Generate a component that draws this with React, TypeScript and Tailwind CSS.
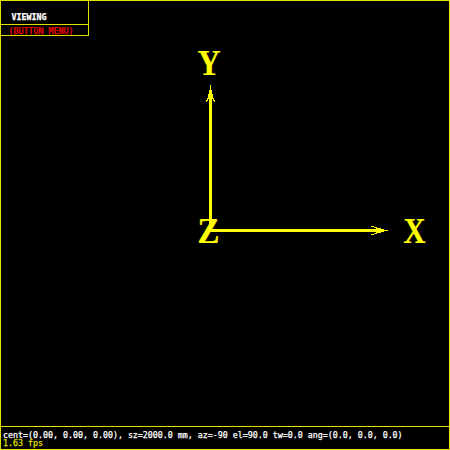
const mono = "font-['DejaVu_Sans_Mono',monospace] text-[8.3px] leading-[8px] whitespace-pre [-webkit-text-stroke:0.25px_currentColor]";

function Axes() {
  const letter = "font-['Liberation_Serif',serif] font-bold text-[35.5px]";
  return (
    <svg className="block h-full w-full" viewBox="1 36 448 390" preserveAspectRatio="none" fill="#ffff00" shapeRendering="crispEdges">
      <g stroke="#ffff00" strokeWidth="0.2">
        <text x="197.5" y="74.5" textLength="23" lengthAdjust="spacingAndGlyphs" className={letter}>Y</text>
        <text x="197.5" y="242.5" textLength="22" lengthAdjust="spacingAndGlyphs" className={letter}>Z</text>
        <text x="403.5" y="242.5" textLength="22" lengthAdjust="spacingAndGlyphs" className={letter}>X</text>
      </g>
      <rect x="209" y="90" width="3" height="142" />
      <rect x="210" y="85" width="1" height="5" />
      <path d="M208 94h5v5h-5zM207 98h1v3h-1zM213 98h1v3h-1zM206 100h1v2h-1zM214 100h1v2h-1z" />
      <rect x="209" y="229" width="175" height="3" />
      <rect x="384" y="230" width="4" height="1" />
      <path d="M376 228h5v5h-5zM374 227h3v1h-3zM374 233h3v1h-3zM371 226h3v1h-3zM371 234h3v1h-3z" />
    </svg>
  );
}

export default function App() {
  return (
    <main className="flex h-[450px] w-[450px] flex-col overflow-hidden border border-solid border-[#e0e000] bg-black">
      <header className="h-[35px] w-[88px] shrink-0 border-r border-b border-solid border-r-[#e0e000] border-b-[#e0e000]">
        <div className={`${mono} h-[24px] border-b border-solid border-b-[#e0e000] pt-[12px] pl-[10.5px] font-bold text-white`}>VIEWING</div>
        <div className={`${mono} pt-[2px] pl-[7.5px] text-[#ff0000]`}>(BUTTON MENU)</div>
      </header>
      <section className="min-h-0 flex-1">
        <Axes />
      </section>
      <footer className={`${mono} h-[23px] shrink-0 border-t border-solid border-t-[#e0e000] pt-[4px] pl-[2px]`}>
        <div className="text-white">cent=(0.00, 0.00, 0.00), sz=2000.0 mm, az=-90 el=90.0 tw=0.0 ang=(0.0, 0.0, 0.0)</div>
        <div className="text-[#e0e000]">1.63 fps</div>
      </footer>
    </main>
  );
}
